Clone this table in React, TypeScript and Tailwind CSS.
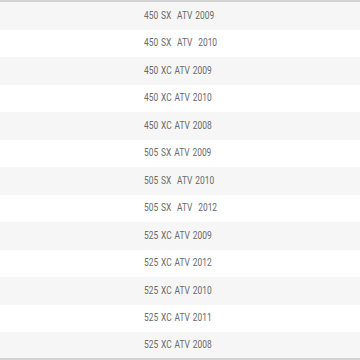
import React from "react";

const rows = [
  "450 SX  ATV 2009",
  "450 SX  ATV  2010",
  "450 XC ATV 2009",
  "450 XC ATV 2010",
  "450 XC ATV 2008",
  "505 SX ATV 2009",
  "505 SX  ATV 2010",
  "505 SX  ATV  2012",
  "525 XC ATV 2009",
  "525 XC ATV 2012",
  "525 XC ATV 2010",
  "525 XC ATV 2011",
  "525 XC ATV 2008",
];

export default function App() {
  return (
    <div className="w-[360px] h-[360px] overflow-hidden bg-white border-t-2 border-[#d4d4d4]">
      {rows.map((r, i) => (
        <div
          key={i}
          className={`h-[27.5px] flex items-center pl-[144px] ${
            i % 2 === 0 ? "bg-[#f6f6f6]" : "bg-white"
          } ${i === rows.length - 1 ? "border-b-2 border-[#d4d4d4]" : ""}`}
        >
          <span className="inline-block whitespace-pre text-[10.5px] text-[#6a6a6a] font-['Roboto',sans-serif] origin-left scale-x-[0.8] [word-spacing:1px]">
            {r}
          </span>
        </div>
      ))}
    </div>
  );
}
